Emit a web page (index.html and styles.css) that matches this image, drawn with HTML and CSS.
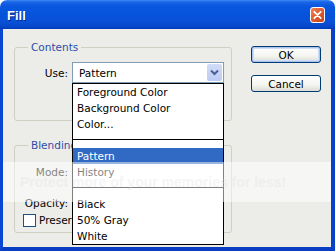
FILE: index.html
```html
<!DOCTYPE html>
<html>
<head>
<meta charset="utf-8">
<title>Fill</title>
<link rel="stylesheet" href="styles.css">
</head>
<body>
<div class="window">
  <div class="titlebar">
    <span class="title">Fill</span>
    <span class="close">
      <svg width="15" height="16" viewBox="0 0 15 16">
        <defs>
          <linearGradient id="cg" x1="0" y1="0" x2="1" y2="1">
            <stop offset="0" stop-color="#f0875e"/>
            <stop offset="0.5" stop-color="#e05a2e"/>
            <stop offset="1" stop-color="#c4401c"/>
          </linearGradient>
        </defs>
        <rect x="0.5" y="0.5" width="14" height="15" rx="2.5" fill="url(#cg)" stroke="#ffffff" stroke-width="1"/>
        <path d="M4.3 4.8 L10.7 11.2 M10.7 4.8 L4.3 11.2" stroke="#ffffff" stroke-width="1.8" stroke-linecap="round"/>
      </svg>
    </span>
  </div>
  <div class="frame">
    <div class="client">
      <div class="groups">
        <fieldset class="group contents">
          <legend>Contents</legend>
          <div class="row use-row">
            <label class="lbl">Use:</label>
            <div class="select">
              <span class="value">Pattern</span>
              <span class="arrow">
                <svg width="15" height="17" viewBox="0 0 15 17">
                  <path d="M4 6.5 L7.5 10 L11 6.5" fill="none" stroke="#4a5f94" stroke-width="2"/>
                </svg>
              </span>
              <ul class="list">
                <li class="item">Foreground Color</li>
                <li class="item">Background Color</li>
                <li class="item">Color...</li>
                <li class="sep"></li>
                <li class="item selected">Pattern</li>
                <li class="item">History</li>
                <li class="sep"></li>
                <li class="item">Black</li>
                <li class="item">50% Gray</li>
                <li class="item">White</li>
              </ul>
            </div>
          </div>
        </fieldset>
        <fieldset class="group blending">
          <legend>Blending</legend>
          <div class="row mode-row"><label class="lbl">Mode:</label></div>
          <div class="row opacity-row"><label class="lbl">Opacity:</label></div>
          <div class="row check-row"><span class="checkbox"></span><span class="check-text">Preserve Transparency</span></div>
        </fieldset>
      </div>
      <div class="buttons">
        <button class="btn default">OK</button>
        <button class="btn">Cancel</button>
      </div>
    </div>
  </div>
  <div class="watermark">Protect more of your memories for less!</div>
</div>
</body>
</html>
```

FILE: styles.css
```css
* { box-sizing: border-box; }
html, body { margin: 0; padding: 0; background: #ffffff; }
body {
  font-family: "DejaVu Sans", "Liberation Sans", sans-serif;
  font-size: 10.5px;
  color: #000;
}
.window {
  position: relative;
  width: 335px;
  height: 251px;
  display: flex;
  flex-direction: column;
  border-radius: 7px 7px 0 0;
  overflow: hidden;
}
.titlebar {
  height: 29px;
  flex: none;
  display: flex;
  align-items: center;
  padding: 0 10px 0 7px;
  background: linear-gradient(#3d8bf2 0, #1a66e6 2px, #0a56e0 6px, #0653dc 14px, #0a50d6 22px, #0646c8 27px, #003bb8 29px);
}
.title {
  flex: 1;
  font-family: "Liberation Sans", sans-serif;
  font-weight: bold;
  font-size: 13px;
  color: #ffffff;
  text-shadow: 1px 1px 0 #0a2a8a;
  padding-top: 2px;
}
.close { display: flex; margin-top: 0; }
.frame {
  flex: 1;
  display: flex;
  border-left: 3px solid #0a46d4;
  border-right: 4px solid #0840c8;
  border-bottom: 4px solid #0a3dc2;
}
.client {
  flex: 1;
  display: flex;
  align-items: flex-start;
  background: #ecece9;
}
.groups {
  margin-left: 11px;
  width: 218px;
  display: flex;
  flex-direction: column;
}
.group {
  margin: 0;
  padding: 0;
  border: 1px solid #cfcfc2;
  border-radius: 3px;
  min-width: 0;
}
.group legend {
  margin-left: 13px;
  padding: 0 3px;
  line-height: 13px;
  height: 13px;
  color: #2d4ea8;
}
.contents {
  margin-top: 12px;
  padding: 8px 0 37px 0;
}
.blending {
  margin-top: 18px;
  padding: 9px 0 5px 0;
}
.row { display: flex; align-items: center; }
.lbl {
  width: 53px;
  text-align: right;
  margin-right: 4px;
  flex: none;
}
.use-row { height: 21px; }
.mode-row { height: 21px; }
.opacity-row { height: 18px; margin-top: 12px; }
.check-row { height: 14px; margin-top: 1px; }
.checkbox {
  width: 13px;
  height: 13px;
  margin-left: 8px;
  border: 1px solid #1c5180;
  background: #ffffff;
  flex: none;
}
.check-text { margin-left: 3px; white-space: nowrap; }
.select {
  position: relative;
  width: 152px;
  height: 21px;
  border: 1px solid #7f9db9;
  background: #ffffff;
  display: flex;
  align-items: center;
}
.value { flex: 1; padding-left: 6px; }
.arrow {
  width: 15px;
  height: 17px;
  margin-right: 1px;
  border-radius: 2px;
  background: linear-gradient(#d2dcf8, #bccbf4);
  display: flex;
}
.list {
  position: absolute;
  z-index: 5;
  left: -1px;
  top: calc(100% + 1px);
  width: 152px;
  margin: 0;
  padding: 0;
  list-style: none;
  background: #ffffff;
  border: 1px solid #000000;
}
.item {
  height: 16px;
  line-height: 16px;
  padding-left: 4px;
  white-space: nowrap;
}
.item.selected { background: #316ac5; color: #ffffff; }
.sep {
  height: 16px;
  background: linear-gradient(transparent 7px, #000 7px, #000 8px, transparent 8px);
}
.buttons {
  margin-left: 19px;
  width: 70px;
  display: flex;
  flex-direction: column;
}
.btn {
  font: inherit;
  height: 17px;
  padding: 0;
  border: 1px solid #003c74;
  border-radius: 3px;
  background: linear-gradient(#ffffff, #f4f4f0 60%, #dcdcd4);
  color: #000;
}
.btn.default {
  margin-top: 17px;
  box-shadow: inset 0 0 0 1px #a8c4ef, inset 0 0 0 2px #cedcf5;
}
.btn + .btn { margin-top: 12px; }
.watermark {
  position: absolute;
  z-index: 10;
  left: 3px;
  right: 4px;
  top: 162px;
  height: 40px;
  line-height: 40px;
  padding-left: 17px;
  background: rgba(255, 255, 255, 0.5);
  color: rgba(225, 225, 225, 0.35);
  font-family: "Liberation Sans", sans-serif;
  font-weight: bold;
  font-size: 14px;
  white-space: nowrap;
  pointer-events: none;
}
```
